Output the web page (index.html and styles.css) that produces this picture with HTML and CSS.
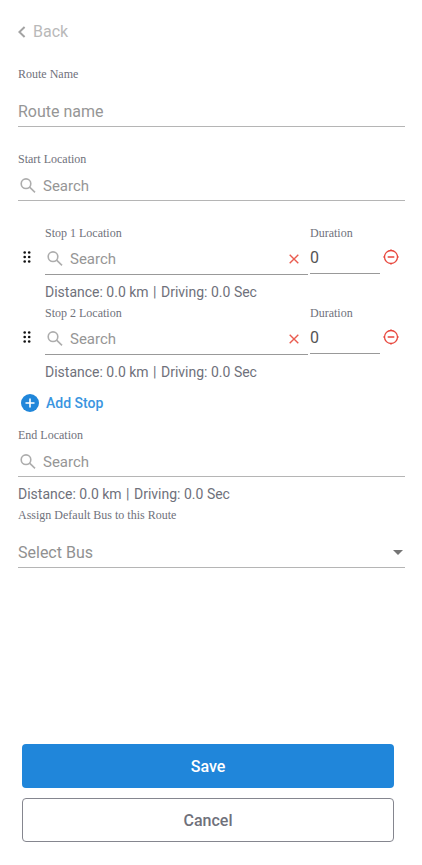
FILE: index.html
```html
<!DOCTYPE html>
<html lang="en">
<head>
<meta charset="utf-8">
<meta name="viewport" content="width=device-width, initial-scale=1">
<title>Route</title>
<link rel="stylesheet" href="styles.css">
</head>
<body>
<svg class="sprite" aria-hidden="true">
  <symbol id="search" viewBox="0 0 16 16"><circle cx="6" cy="5.7" r="4.8"/><path d="M9.6 9.2 15 14.4"/></symbol>
  <symbol id="grip" viewBox="0 0 8 12"><g><circle cx="1.7" cy="1.5" r="1.3"/><circle cx="6.2" cy="1.5" r="1.3"/><circle cx="1.7" cy="6" r="1.3"/><circle cx="6.2" cy="6" r="1.3"/><circle cx="1.7" cy="10.5" r="1.3"/><circle cx="6.2" cy="10.5" r="1.3"/></g></symbol>
  <symbol id="cross" viewBox="0 0 10 10"><path d="M.7.7 9.3 9.3M9.3.7.7 9.3"/></symbol>
  <symbol id="minus" viewBox="0 0 16 16"><circle cx="8" cy="8" r="6.5"/><path d="M4.7 8h6.6M8 .4v1.5M8 14.1v1.5M.4 8h1.5M14.1 8h1.5"/></symbol>
</svg>
<form class="page">
  <a class="back" href="#"><svg class="back-icon" viewBox="0 0 8 12"><path d="M6.6 1 1.4 6l5.2 5"/></svg>Back</a>

  <label class="label first" for="name">Route Name</label>
  <input class="line-input" id="name" type="text" placeholder="Route name">

  <label class="label spaced" for="start">Start Location</label>
  <div class="search">
    <svg class="search-icon"><use href="#search"/></svg>
    <input id="start" type="text" placeholder="Search">
  </div>

  <div class="stops">
    <div class="stop">
      <label class="label place" for="stop1">Stop 1 Location</label>
      <label class="label" for="duration1">Duration</label>
      <button class="icon-button grip" type="button" aria-label="Move stop 1"><svg><use href="#grip"/></svg></button>
      <div class="search">
        <svg class="search-icon"><use href="#search"/></svg>
        <input id="stop1" type="text" placeholder="Search">
        <button class="icon-button clear" type="button" aria-label="Clear stop 1"><svg><use href="#cross"/></svg></button>
      </div>
      <input class="duration" id="duration1" type="text" value="0">
      <button class="icon-button remove" type="button" aria-label="Remove stop 1"><svg><use href="#minus"/></svg></button>
      <p class="distance">Distance: 0.0 km <span class="divider">|</span> Driving: 0.0 Sec</p>
    </div>
    <div class="stop">
      <label class="label place" for="stop2">Stop 2 Location</label>
      <label class="label" for="duration2">Duration</label>
      <button class="icon-button grip" type="button" aria-label="Move stop 2"><svg><use href="#grip"/></svg></button>
      <div class="search">
        <svg class="search-icon"><use href="#search"/></svg>
        <input id="stop2" type="text" placeholder="Search">
        <button class="icon-button clear" type="button" aria-label="Clear stop 2"><svg><use href="#cross"/></svg></button>
      </div>
      <input class="duration" id="duration2" type="text" value="0">
      <button class="icon-button remove" type="button" aria-label="Remove stop 2"><svg><use href="#minus"/></svg></button>
      <p class="distance">Distance: 0.0 km <span class="divider">|</span> Driving: 0.0 Sec</p>
    </div>
  </div>

  <button class="add" type="button"><svg class="add-icon" viewBox="0 0 18 18"><circle cx="9" cy="9" r="9"/><path d="M9 4.5v9M4.5 9h9"/></svg>Add Stop</button>

  <label class="label end" for="end">End Location</label>
  <div class="search">
    <svg class="search-icon"><use href="#search"/></svg>
    <input id="end" type="text" placeholder="Search">
  </div>
  <p class="distance">Distance: 0.0 km <span class="divider">|</span> Driving: 0.0 Sec</p>

  <label class="label assign" for="bus">Assign Default Bus to this Route</label>
  <div class="select">
    <select class="line-input" id="bus"><option>Select Bus</option></select>
    <svg class="caret" viewBox="0 0 10 5"><path d="M0 0h10L5 5z"/></svg>
  </div>

  <div class="actions">
    <button class="button save" type="submit">Save</button>
    <button class="button cancel" type="button">Cancel</button>
  </div>
</form>
</body>
</html>
```
FILE: styles.css
```css
* {
  box-sizing: border-box;
}

body {
  margin: 0;
  background: #fff;
  color: #6f717b;
  font-family: Roboto, sans-serif;
}

input,
select,
button {
  min-width: 0;
  margin: 0;
  padding: 0;
  border: 0;
  background: none;
  font-family: inherit;
}

.sprite {
  position: absolute;
  width: 0;
  height: 0;
}

.page {
  display: flex;
  flex-direction: column;
  min-height: 100vh;
  padding: 20px 17px 23px 18px;
}

.back {
  display: flex;
  align-items: center;
  align-self: flex-start;
  gap: 7px;
  color: #b9b9b9;
  font-size: 16px;
  line-height: 24px;
  text-decoration: none;
}

.back-icon {
  width: 8px;
  height: 12px;
  fill: none;
  stroke: #a3a3a3;
  stroke-width: 2;
}

.label {
  font-family: "Liberation Serif", serif;
  font-size: 12px;
  line-height: 16px;
}

.first {
  margin-top: 22px;
}

.spaced {
  margin-top: 24px;
}

.end {
  margin-top: 14px;
}

.assign {
  margin-top: 3px;
}

.line-input {
  width: 100%;
  height: 45px;
  padding-top: 14px;
  border-bottom: 1px solid #b5b5b5;
  color: #919191;
  font-size: 16px;
}

::placeholder {
  color: #969696;
  opacity: 1;
}

.search {
  display: flex;
  align-items: center;
  gap: 7px;
  height: 34px;
  padding: 4px 9px 0 2px;
  border-bottom: 1px solid #b5b5b5;
}

.search-icon {
  flex: none;
  width: 16px;
  height: 16px;
  fill: none;
  stroke: #adadad;
  stroke-width: 1.6;
}

.search input {
  flex: 1;
  height: 28px;
  font-size: 15px;
}

.stops {
  display: grid;
  gap: 3px;
  margin-top: 24px;
}

.stop {
  display: grid;
  grid-template-columns: 25px 1fr 70px 23px;
  column-gap: 2px;
}

.place {
  grid-column: 2;
}

.icon-button {
  display: flex;
  align-items: center;
  cursor: pointer;
}

.grip {
  grid-column: 1;
  height: 32px;
  padding-left: 5px;
}

.grip svg {
  width: 8px;
  height: 12px;
  fill: #111;
}

.clear svg {
  width: 10px;
  height: 10px;
  stroke: #ea5c50;
  stroke-width: 1.4;
}

.remove {
  height: 32px;
  padding-left: 1px;
}

.remove svg {
  width: 16px;
  height: 16px;
  fill: none;
  stroke: #e8463c;
  stroke-width: 1.3;
}

.stop .search,
.duration {
  border-bottom: 1px solid #999;
}

.stop .search {
  padding-bottom: 1px;
}

.duration {
  width: 100%;
  height: 33px;
  color: #555;
  font-size: 16px;
}

.distance {
  margin: 7px 0 0;
  font-size: 14px;
  line-height: 20px;
}

.divider {
  margin: 0 1px;
}

.stop .distance {
  grid-column: 2 / -1;
}

.add {
  display: flex;
  align-items: center;
  align-self: flex-start;
  gap: 7px;
  margin-top: 11px;
  padding-left: 3px;
  color: #3a95e0;
  font-size: 14px;
  font-weight: 500;
  line-height: 20px;
}

.add-icon {
  width: 18px;
  height: 18px;
  fill: #2086da;
  stroke: none;
}

.add-icon path {
  stroke: #fff;
  stroke-width: 1.6;
}

.select {
  display: grid;
  align-items: center;
}

.select > * {
  grid-area: 1 / 1;
}

.select select {
  appearance: none;
  border-radius: 0;
}

.caret {
  justify-self: end;
  width: 10px;
  height: 5px;
  margin: 14px 2px 0 0;
  fill: #757575;
  pointer-events: none;
}

.actions {
  display: grid;
  gap: 10px;
  margin-top: auto;
  padding: 24px 11px 0 4px;
}

.button {
  height: 44px;
  border-radius: 4px;
  font-size: 16px;
  font-weight: 500;
}

.save {
  background: #2086da;
  color: #fff;
}

.cancel {
  border: 1px solid #85868f;
  color: #6f717b;
}
```
